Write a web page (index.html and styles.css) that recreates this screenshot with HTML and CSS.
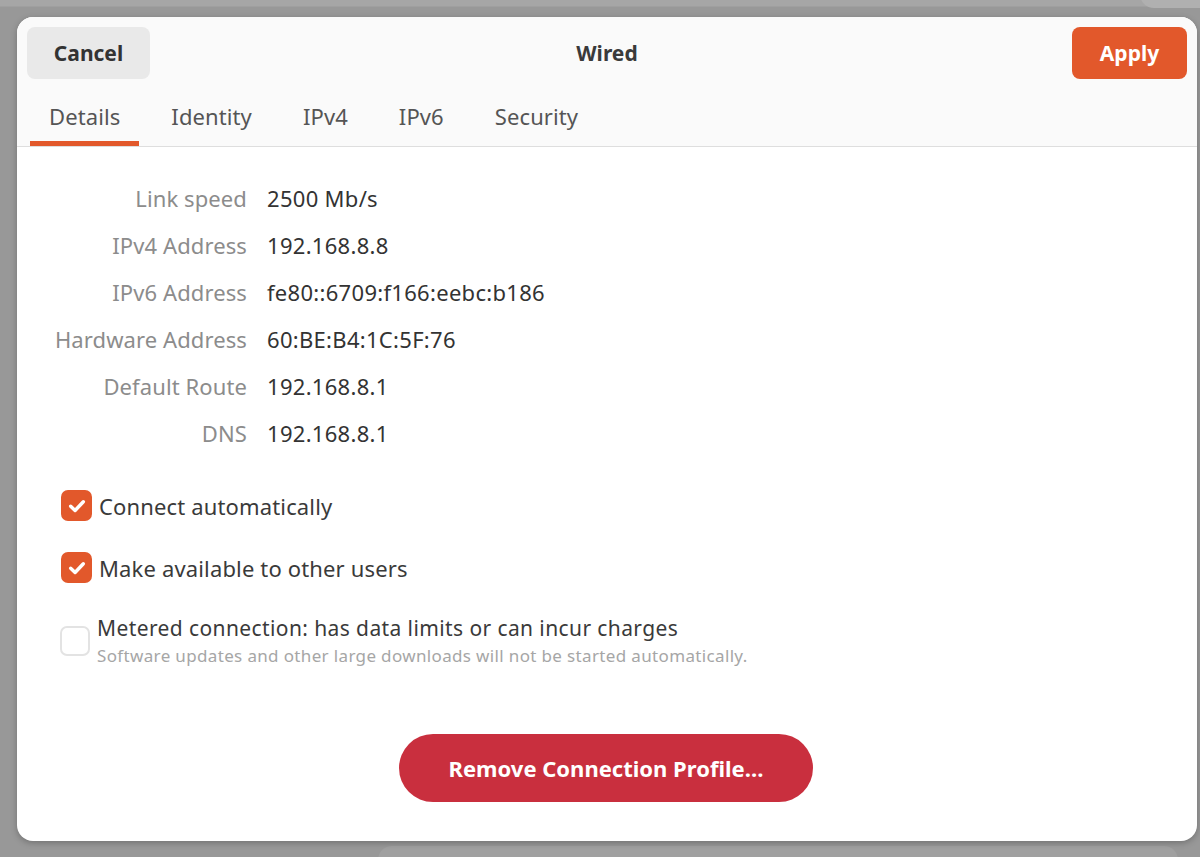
FILE: index.html
```html
<!DOCTYPE html>
<html>
<head>
<meta charset="utf-8">
<link rel="stylesheet" href="styles.css">
</head>
<body>
<div class="desk">
  <div class="bgwin bgwin-top"></div>
  <div class="bgwin bgwin-bottom"></div>
  <div class="dialog">
    <div class="header">
      <div class="titlebar">
        <button class="btn btn-cancel">Cancel</button>
        <div class="title">Wired</div>
        <button class="btn btn-apply">Apply</button>
      </div>
      <div class="tabs">
        <div class="tab active">Details</div>
        <div class="tab">Identity</div>
        <div class="tab">IPv4</div>
        <div class="tab">IPv6</div>
        <div class="tab">Security</div>
      </div>
    </div>
    <div class="body">
      <div class="details">
        <div class="lbl">Link speed</div><div class="val">2500 Mb/s</div>
        <div class="lbl">IPv4 Address</div><div class="val">192.168.8.8</div>
        <div class="lbl">IPv6 Address</div><div class="val">fe80::6709:f166:eebc:b186</div>
        <div class="lbl">Hardware Address</div><div class="val">60:BE:B4:1C:5F:76</div>
        <div class="lbl">Default Route</div><div class="val">192.168.8.1</div>
        <div class="lbl">DNS</div><div class="val">192.168.8.1</div>
      </div>
      <div class="checks">
        <div class="check">
          <span class="box on"><svg viewBox="0 0 16 16" width="22" height="22"><path d="M3.4 8.2 L6.6 11.3 L12.6 4.9" fill="none" stroke="#fff" stroke-width="2.5" stroke-linecap="round" stroke-linejoin="round"/></svg></span>
          <span class="ctext">Connect automatically</span>
        </div>
        <div class="check">
          <span class="box on"><svg viewBox="0 0 16 16" width="22" height="22"><path d="M3.4 8.2 L6.6 11.3 L12.6 4.9" fill="none" stroke="#fff" stroke-width="2.5" stroke-linecap="round" stroke-linejoin="round"/></svg></span>
          <span class="ctext">Make available to other users</span>
        </div>
        <div class="check check-metered">
          <span class="box off"></span>
          <span class="cgroup">
            <span class="ctext">Metered connection: has data limits or can incur charges</span>
            <span class="csub">Software updates and other large downloads will not be started automatically.</span>
          </span>
        </div>
      </div>
      <div class="remove-row">
        <button class="btn-remove">Remove Connection Profile…</button>
      </div>
    </div>
  </div>
</div>
</body>
</html>
```

FILE: styles.css
```css
* { box-sizing: border-box; }
html, body {
  margin: 0;
  padding: 0;
  width: 1200px;
  height: 857px;
  overflow: hidden;
}
body {
  background: #999999;
  font-family: "Noto Sans", "Open Sans", sans-serif;
}
.desk {
  position: relative;
  width: 1200px;
  height: 857px;
  overflow: hidden;
  padding: 17px 3px 16px 17px;
  background: linear-gradient(#a6a6a6 0, #a6a6a6 6px, #989898 7px, #989898 100%);
}
.bgwin {
  position: absolute;
}
.bgwin-top {
  left: 1140px;
  top: -20px;
  width: 120px;
  height: 28px;
  border-radius: 14px;
  background: #b0b0b0;
}
.bgwin-bottom {
  left: 378px;
  top: 846px;
  width: 800px;
  height: 40px;
  border-radius: 14px;
  background: #a0a0a0;
}
.dialog {
  position: relative;
  width: 1180px;
  height: 824px;
  background: #ffffff;
  border-radius: 16px;
  overflow: hidden;
  box-shadow: 0 2px 6px rgba(0,0,0,0.25);
  display: flex;
  flex-direction: column;
}
.header {
  background: #fafafa;
  border-bottom: 1px solid #dedede;
}
.titlebar {
  display: flex;
  align-items: center;
  justify-content: space-between;
  padding: 10px 10px 0 10px;
  position: relative;
}
.btn {
  border: none;
  height: 52px;
  border-radius: 8px;
  font-family: inherit;
  font-weight: 700;
  font-size: 21px;
  padding: 0;
}
.btn-cancel {
  width: 123px;
  background: #e9e9e9;
  color: #333333;
}
.btn-apply {
  width: 115px;
  background: #e2582b;
  color: #ffffff;
}
.title {
  position: absolute;
  left: 0;
  right: 0;
  text-align: center;
  font-weight: 700;
  font-size: 21px;
  color: #3a3a3a;
  pointer-events: none;
}
.tabs {
  display: flex;
  gap: 13px;
  padding: 0 0 0 13px;
  height: 67px;
  align-items: stretch;
}
.tab {
  padding: 12px 19px 0 19px;
  display: flex;
  align-items: center;
  font-size: 22px;
  letter-spacing: 0.1px;
  color: #555555;
  border-bottom: 5px solid transparent;
}
.tab.active {
  border-bottom-color: #e2582b;
}
.body {
  flex: 1;
  display: flex;
  flex-direction: column;
}
.details {
  display: grid;
  grid-template-columns: 230px auto;
  column-gap: 20px;
  grid-auto-rows: 47px;
  padding-top: 27px;
  font-size: 22px;
}
.lbl {
  color: #8c8c8c;
  letter-spacing: 0.1px;
  display: flex;
  align-items: center;
  justify-content: flex-end;
  white-space: nowrap;
}
.val {
  color: #333333;
  letter-spacing: 0.3px;
  display: flex;
  align-items: center;
  white-space: nowrap;
}
.checks {
  display: flex;
  flex-direction: column;
  padding: 34px 0 0 44px;
  gap: 31px;
}
.check {
  display: flex;
  align-items: center;
  gap: 7px;
  font-size: 22px;
  letter-spacing: 0.15px;
  color: #3a3a3a;
}
.box {
  width: 31px;
  height: 31px;
  border-radius: 7px;
  display: flex;
  align-items: center;
  justify-content: center;
  flex: none;
}
.box.on {
  background: #e2582b;
}
.box.off {
  border: 2px solid #e3e3e3;
  background: #ffffff;
  width: 30px;
  height: 30px;
  margin-left: -1px;
}
.check-metered {
  align-items: flex-start;
}
.check-metered .box {
  margin-top: 12px;
}
.cgroup {
  display: flex;
  flex-direction: column;
}
.check-metered .ctext {
  font-size: 21px;
  letter-spacing: 0.4px;
  line-height: 28px;
}
.csub {
  font-size: 17px;
  letter-spacing: 0.35px;
  color: #a6a6a6;
  line-height: 24px;
  margin-top: 2px;
}
.remove-row {
  display: flex;
  justify-content: center;
  padding-top: 66px;
}
.btn-remove {
  width: 414px;
  height: 68px;
  border: none;
  border-radius: 34px;
  background: #c92f3e;
  color: #ffffff;
  font-family: inherit;
  font-weight: 700;
  font-size: 22px;
  margin-left: -2px;
}
```
